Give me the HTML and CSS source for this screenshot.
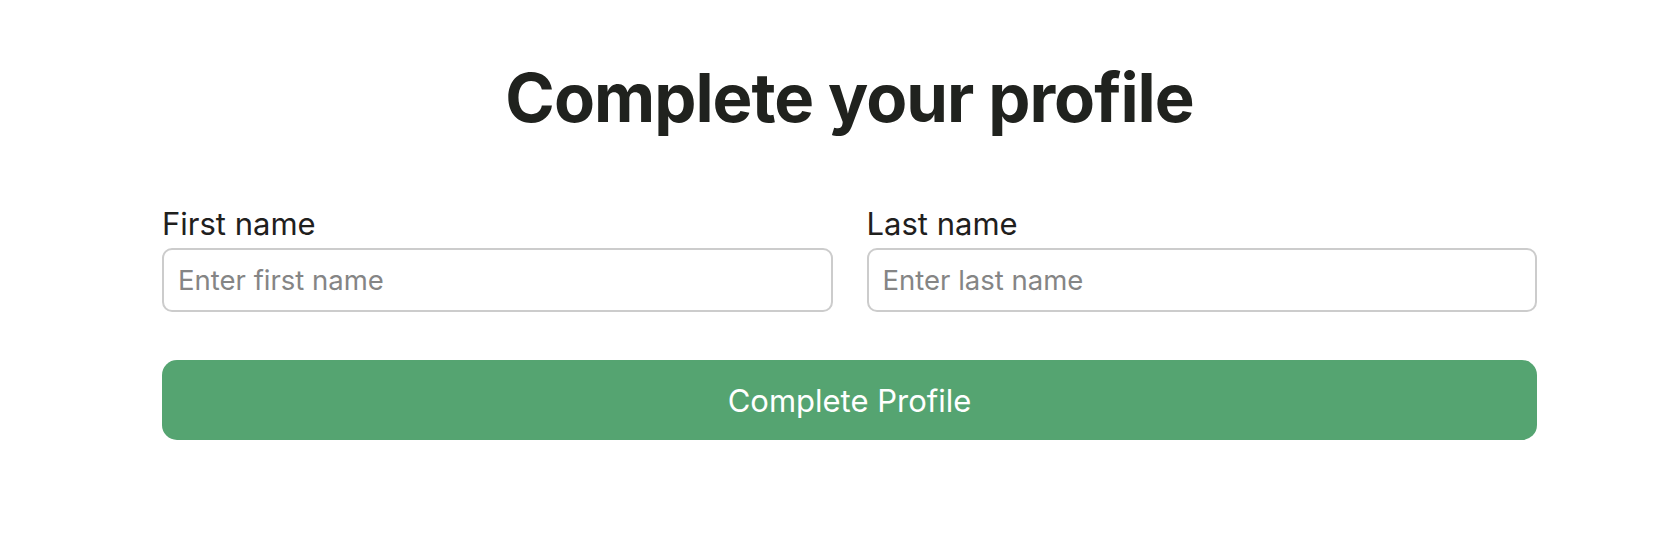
FILE: index.html
```html
<!DOCTYPE html>
<html lang="en">
<head>
<meta charset="utf-8">
<title>Complete your profile</title>
<link rel="stylesheet" href="styles.css">
</head>
<body>
<main class="page">
  <form class="profile-form">
    <h1 class="title">Complete your profile</h1>
    <div class="fields">
      <label class="field">
        <span class="field-label">First name</span>
        <input class="field-input" type="text" placeholder="Enter first name">
      </label>
      <label class="field">
        <span class="field-label">Last name</span>
        <input class="field-input" type="text" placeholder="Enter last name">
      </label>
    </div>
    <button class="submit" type="button">Complete Profile</button>
  </form>
</main>
</body>
</html>
```

FILE: styles.css
```css
* { box-sizing: border-box; }
html, body {
  margin: 0;
  background: #ffffff;
  font-family: Inter, "Noto Sans", "Liberation Sans", sans-serif;
  color: #1f201d;
}
.page {
  padding: 0 129px 0 162px;
}
.profile-form {
  display: flex;
  flex-direction: column;
}
.title {
  margin: 57px 0 0;
  font-size: 67px;
  font-weight: 700;
  line-height: 82px;
  letter-spacing: -1px;
  text-align: center;
  color: #20221e;
}
.fields {
  display: grid;
  grid-template-columns: 1fr 1fr;
  column-gap: 34px;
  margin-top: 67px;
}
.field {
  display: flex;
  flex-direction: column;
  gap: 6px;
}
.field-label {
  font-size: 31px;
  line-height: 36px;
  color: #1f201d;
}
.field-input {
  height: 64px;
  padding: 0 14px;
  border: 2px solid #cccccc;
  border-radius: 10px;
  font-family: inherit;
  font-size: 27.5px;
  color: #1f201d;
  background: #fff;
  outline: none;
}
.field-input::placeholder {
  color: #858585;
}
.submit {
  margin-top: 48px;
  height: 80px;
  border: none;
  border-radius: 15px;
  background: #55a471;
  color: #ffffff;
  font-family: inherit;
  font-size: 31px;
  cursor: pointer;
}
```
